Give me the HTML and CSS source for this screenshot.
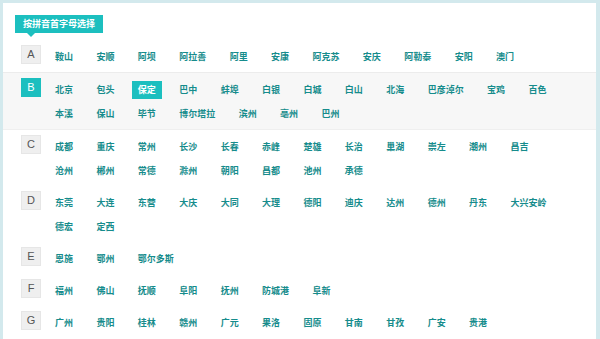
FILE: index.html
```html
<!DOCTYPE html>
<html lang="zh-CN">
<head>
    <meta charset="UTF-8">
    <title>按拼音首字母选择</title>
    <link rel="stylesheet" href="styles.css">
</head>
<body>
    <div class="panel">
        <div class="tag-wrap">
            <span class="tag">按拼音首字母选择</span>
        </div>
        <ul class="letter-list">
            <li class="letter-row">
                <span class="letter">A</span>
                <div class="cities">
                    <a>鞍山</a><a>安顺</a><a>阿坝</a><a>阿拉善</a><a>阿里</a><a>安康</a><a>阿克苏</a><a>安庆</a><a>阿勒泰</a><a>安阳</a><a>澳门</a>
                </div>
            </li>
            <li class="letter-row active">
                <span class="letter">B</span>
                <div class="cities">
                    <a>北京</a><a>包头</a><a class="current">保定</a><a>巴中</a><a>蚌埠</a><a>白银</a><a>白城</a><a>白山</a><a>北海</a><a>巴彦淖尔</a><a>宝鸡</a><a>百色</a>
                    <a>本溪</a><a>保山</a><a>毕节</a><a>博尔塔拉</a><a>滨州</a><a>亳州</a><a>巴州</a>
                </div>
            </li>
            <li class="letter-row">
                <span class="letter">C</span>
                <div class="cities">
                    <a>成都</a><a>重庆</a><a>常州</a><a>长沙</a><a>长春</a><a>赤峰</a><a>楚雄</a><a>长治</a><a>巢湖</a><a>崇左</a><a>潮州</a><a>昌吉</a>
                    <a>沧州</a><a>郴州</a><a>常德</a><a>滁州</a><a>朝阳</a><a>昌都</a><a>池州</a><a>承德</a>
                </div>
            </li>
            <li class="letter-row">
                <span class="letter">D</span>
                <div class="cities">
                    <a>东莞</a><a>大连</a><a>东营</a><a>大庆</a><a>大同</a><a>大理</a><a>德阳</a><a>迪庆</a><a>达州</a><a>德州</a><a>丹东</a><a>大兴安岭</a>
                    <a>德宏</a><a>定西</a>
                </div>
            </li>
            <li class="letter-row">
                <span class="letter">E</span>
                <div class="cities">
                    <a>恩施</a><a>鄂州</a><a>鄂尔多斯</a>
                </div>
            </li>
            <li class="letter-row">
                <span class="letter">F</span>
                <div class="cities">
                    <a>福州</a><a>佛山</a><a>抚顺</a><a>阜阳</a><a>抚州</a><a>防城港</a><a>阜新</a>
                </div>
            </li>
            <li class="letter-row">
                <span class="letter">G</span>
                <div class="cities">
                    <a>广州</a><a>贵阳</a><a>桂林</a><a>赣州</a><a>广元</a><a>果洛</a><a>固原</a><a>甘南</a><a>甘孜</a><a>广安</a><a>贵港</a>
                </div>
            </li>
        </ul>
    </div>
</body>
</html>
```

FILE: styles.css
```css
html, body {
    height: 100%;
}
body {
    margin: 0;
    padding: 3px 4px 0 3px;
    box-sizing: border-box;
    background-color: #d3e9ed;
    font-family: "Liberation Sans", "Noto Sans CJK SC", sans-serif;
    overflow: hidden;
}
.panel {
    background-color: #fff;
    height: 100%;
}
.tag-wrap {
    display: flex;
    padding: 12px 0 0 12px;
}
.tag {
    position: relative;
    height: 18px;
    line-height: 18px;
    padding: 0 8px;
    background-color: #1cbfbf;
    color: #fff;
    font-size: 9px;
    font-weight: bold;
    font-family: "Noto Sans CJK SC", sans-serif;
}
.tag::after {
    content: "";
    position: absolute;
    left: 12px;
    top: 18px;
    border-left: 4px solid transparent;
    border-right: 4px solid transparent;
    border-top: 4px solid #1cbfbf;
}
.letter-list {
    list-style: none;
    margin: 7px 0 0;
    padding: 0;
}
.letter-row {
    display: flex;
    align-items: flex-start;
    padding: 5px 24px 3px 18px;
}
.letter-row:first-child {
    border-bottom: 1px solid #ececec;
}
.letter-row.active {
    background-color: #f7f7f7;
    border-bottom: 1px solid #efefef;
}
.letter {
    flex: none;
    width: 18px;
    height: 17px;
    line-height: 17px;
    text-align: center;
    background-color: #efefef;
    border: 1px solid #e6e6e6;
    color: #555;
    font-size: 11px;
}
.active .letter {
    background-color: #1cbfbf;
    border-color: #1cbfbf;
    color: #fff;
}
.cities {
    flex: 1;
    display: flex;
    flex-wrap: wrap;
    margin-left: 8px;
}
.cities a {
    height: 18px;
    line-height: 18px;
    padding: 0 6px;
    margin: 3px 11.4px 3px 0;
    color: #168c8c;
    font-size: 9px;
    font-weight: bold;
    font-family: "Noto Sans CJK SC", sans-serif;
    white-space: nowrap;
    cursor: pointer;
}
.cities a.current {
    background-color: #1cbfbf;
    color: #fff;
}
```
